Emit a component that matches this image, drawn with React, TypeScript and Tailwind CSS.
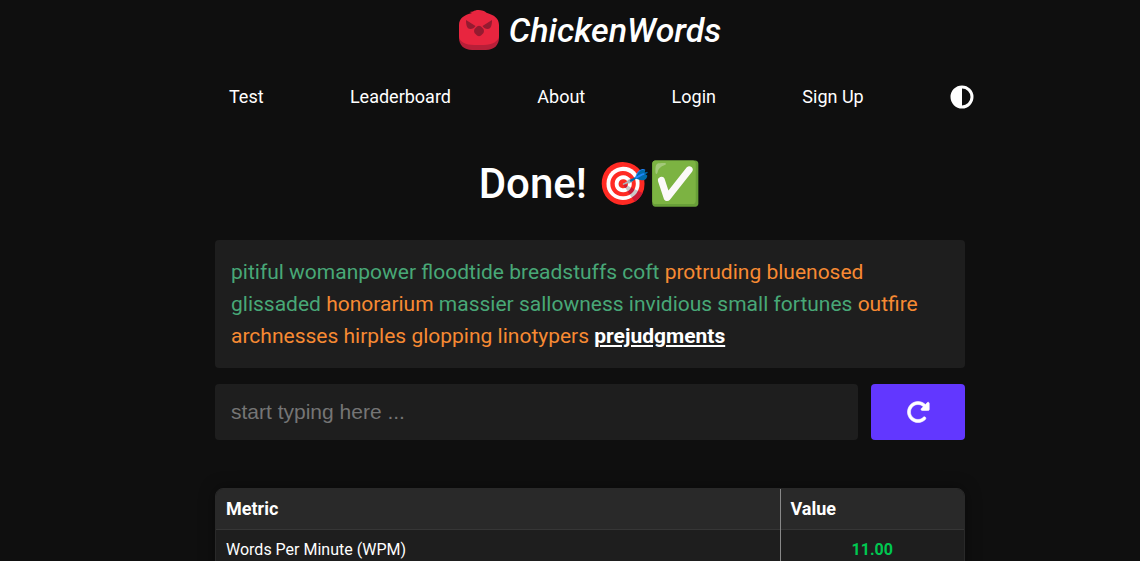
import { useState } from "react";
import { FaRotateRight } from "react-icons/fa6";

type Word = { text: string; state: "correct" | "wrong" | "current" };

const words: Word[] = [
  { text: "pitiful", state: "correct" },
  { text: "womanpower", state: "correct" },
  { text: "floodtide", state: "correct" },
  { text: "breadstuffs", state: "correct" },
  { text: "coft", state: "correct" },
  { text: "protruding", state: "wrong" },
  { text: "bluenosed", state: "wrong" },
  { text: "glissaded", state: "correct" },
  { text: "honorarium", state: "wrong" },
  { text: "massier", state: "correct" },
  { text: "sallowness", state: "correct" },
  { text: "invidious", state: "correct" },
  { text: "small", state: "correct" },
  { text: "fortunes", state: "correct" },
  { text: "outfire", state: "wrong" },
  { text: "archnesses", state: "wrong" },
  { text: "hirples", state: "wrong" },
  { text: "glopping", state: "wrong" },
  { text: "linotypers", state: "wrong" },
  { text: "prejudgments", state: "current" },
];

const wordStyles = {
  correct: "text-[#48a877]",
  wrong: "text-[#f78a33]",
  current: "font-bold text-white underline",
};

const links = ["Test", "Leaderboard", "About", "Login", "Sign Up"];

function Logo() {
  return (
    <svg viewBox="0 0 40 40" className="size-10" aria-hidden="true">
      <path d="M0 26h40v2c0 7-5 12-13 12H13C5 40 0 35 0 28z" fill="#b81f38" />
      <path d="M10.500 2L14 1.500C15.500 .5 17 0 19.500 0c3.500 0 6 .8 8 2.800C35 5 40 8.500 40 15v11c0 5-7 9-15 9H15C7 35 0 32 0 26V15C0 8.500 5 5 13 3z" fill="#e8253f" />
      <path d="M7 10l9.500 6c-1 2-3 3-5 3C7.500 19 7 14 7 10zM33 10l-9.500 6c1 2 3 3 5 3 4 0 4.500-5 4.500-9z" fill="#941b30" />
      <path d="M18 16.500q2-1.500 4 0l2.500 2.500q1 2 0 4L22 25.500q-2 1.500-4 0L15.500 23q-1-2 0-4z" fill="#941b30" />
    </svg>
  );
}

function ContrastIcon() {
  return (
    <svg viewBox="0 0 24 24" className="size-6" aria-hidden="true">
      <path fill="currentColor" fillRule="evenodd" d="M12 .5a11.500 11.500 0 1 0 0 23 11.500 11.500 0 0 0 0-23zM12 3.500a8.500 8.500 0 0 1 0 17z" />
    </svg>
  );
}

export default function App() {
  const [typed, setTyped] = useState("");
  return (
    <div className="h-screen overflow-hidden bg-[#0f0f0f] pl-10 font-['Roboto',sans-serif] text-white">
      <div className="mx-auto flex max-w-[750px] flex-col">
        <header>
          <a href="#home" className="flex h-[60px] items-center justify-center gap-[10px]">
            <Logo />
            <span className="text-[34px] font-medium italic">ChickenWords</span>
          </a>
          <nav className="-mr-[9px] flex h-[74px] items-center justify-between pl-[14px] text-lg">
            {links.map((link) => (
              <a key={link} href="#page">{link}</a>
            ))}
            <button type="button" aria-label="Toggle theme">
              <ContrastIcon />
            </button>
          </nav>
        </header>
        <main>
          <h1 className="mb-2 flex h-[98px] items-center justify-center text-[42px] font-medium whitespace-pre">Done! 🎯✅</h1>
          <p className="rounded bg-[#1e1e1e] p-4 text-[21px] leading-8">
            {words.map((word) => (
              <span key={word.text}>
                <span className={wordStyles[word.state]}>{word.text}</span>{" "}
              </span>
            ))}
          </p>
          <div className="mt-4 flex h-14 gap-[13px]">
            <input
              aria-label="Type the words"
              placeholder="start typing here ..."
              value={typed}
              onChange={(e) => setTyped(e.target.value)}
              className="min-w-0 flex-1 rounded bg-[#1e1e1e] px-4 font-['Liberation_Sans',sans-serif] text-[21px] outline-none placeholder:text-[#757575]"
            />
            <button
              type="button"
              aria-label="Restart"
              onClick={() => setTyped("")}
              className="flex w-[94px] items-center justify-center rounded bg-[#6237ff]"
            >
              <FaRotateRight className="size-6 stroke-white stroke-[12]" />
            </button>
          </div>
          <div className="mt-12 overflow-hidden rounded-lg border border-[#292929] bg-[#1e1e1e] shadow-[0_0_16px_rgba(0,0,0,0.4)]">
            <table className="w-full border-collapse text-left">
              <thead className="bg-[#292929] text-lg">
                <tr className="h-10 border-b border-[#363636]">
                  <th className="border-r border-[#888888] px-[10px] font-bold">Metric</th>
                  <th className="w-[184px] px-[10px] font-bold">Value</th>
                </tr>
              </thead>
              <tbody>
                <tr className="h-[42px]">
                  <td className="border-r border-[#888888] px-[10px]">Words Per Minute (WPM)</td>
                  <td className="px-[10px] text-center font-bold text-[#00c851]">11.00</td>
                </tr>
              </tbody>
            </table>
          </div>
        </main>
      </div>
    </div>
  );
}
